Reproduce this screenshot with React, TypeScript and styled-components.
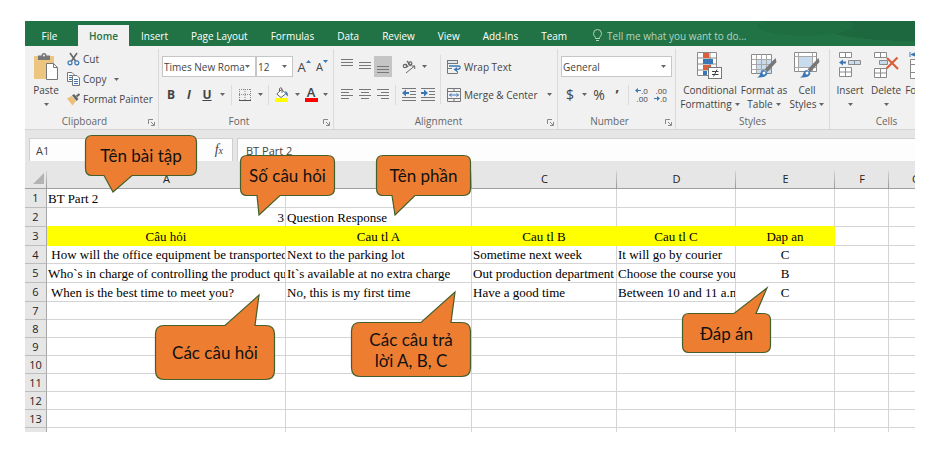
import React from 'react';
import styled, { createGlobalStyle, css } from 'styled-components';

const UI = '"Open Sans", "Noto Sans", sans-serif';
const SERIF = '"Liberation Serif", "Times New Roman", serif';
const GREEN = '#217346';
const INK = '#444444';
const CHROME = '#e6e6e6';
const BLUE = '#3a78b5';
const GREY = '#777777';
const GRID = '#d4d4d4';

const GlobalStyle = createGlobalStyle`
  *, *::before, *::after { box-sizing: border-box; }
  body { margin: 0; background: #ffffff; overflow: hidden; }
  button, input, select {
    margin: 0;
    padding: 0;
    border: 0;
    background: none;
    color: inherit;
    font: inherit;
    appearance: none;
  }
  svg { display: block; flex: none; }
`;

const Page = styled.div`
  height: 100vh;
  padding: 21px 18px 20px 25px;
  font: 10px/14px ${UI};
  color: ${INK};
`;

const Workbook = styled.main`
  position: relative;
  height: 100%;
  overflow: hidden;
  display: flex;
  flex-direction: column;
  background: ${CHROME};
`;

/* ---------- tab strip ---------- */

const TabStrip = styled.nav`
  flex: none;
  display: flex;
  align-items: stretch;
  height: 25px;
  color: #ffffff;
  background:
    radial-gradient(ellipse 48px 10px at calc(100% - 110px) 5px, #1f6e41 0 98%, transparent),
    radial-gradient(ellipse 90px 16px at calc(100% - 6px) 4px, #1d683e 0 98%, transparent),
    ${GREEN};
`;

const Tab = styled.button<{ $active?: boolean; $file?: boolean }>`
  padding: 4px 11px 0 12px;
  white-space: nowrap;
  ${p => p.$file && css`width: 53px; padding: 4px 4px 0 0;`}
  ${p =>
    p.$active &&
    css`
      width: 51px;
      margin-top: 4px;
      padding: 0;
      background: #f1f1f1;
      color: ${GREEN};
      font-weight: 600;
    `}
`;

const TellMe = styled.label`
  display: flex;
  align-items: center;
  gap: 5px;
  flex: 1;
  padding: 4px 0 0 15px;
  color: #b5d3c1;

  input { flex: 1; min-width: 0; height: 18px; }
  input::placeholder { color: #b5d3c1; opacity: 1; }
`;

/* ---------- ribbon ---------- */

const Ribbon = styled.section`
  flex: none;
  display: flex;
  height: 84px;
  background: #f1f1f1;
  border-bottom: 1px solid #d5d5d5;
`;

const Group = styled.section<{ $w: number }>`
  flex: none;
  display: flex;
  flex-direction: column;
  width: ${p => p.$w}px;
  height: 80px;
  margin-top: 3px;
  border-right: 1px solid #dadada;
`;

const GroupBody = styled.div<{ $left: number }>`
  flex: 1;
  min-height: 0;
  display: flex;
  align-items: flex-start;
  padding-left: ${p => p.$left}px;
`;

const GroupFoot = styled.footer`
  display: flex;
  align-items: center;
  height: 16px;
  text-align: center;
  color: #666666;

  h2 { flex: 1; margin: 0; font: inherit; }
`;

const Column = styled.div`
  display: flex;
  flex-direction: column;
  gap: 7px;
  padding-top: 7px;
`;

const ClipList = styled(Column)`
  gap: 0;
  padding-top: 0;
`;

const Line = styled.div`
  display: flex;
  align-items: center;
  height: 21px;
`;

const Tool = styled.button<{ $w: number; $on?: boolean }>`
  flex: none;
  display: flex;
  align-items: center;
  justify-content: center;
  width: ${p => p.$w}px;
  height: 21px;
  background: ${p => (p.$on ? '#c5c5c5' : 'transparent')};
`;

const Glyph = styled.span<{ $size?: number; $bold?: boolean; $italic?: boolean; $line?: boolean }>`
  font-size: ${p => p.$size ?? 12}px;
  font-weight: ${p => (p.$bold ? 700 : 400)};
  font-style: ${p => (p.$italic ? 'italic' : 'normal')};
  text-decoration: ${p => (p.$line ? 'underline' : 'none')};
  line-height: 16px;
`;

const TextTool = styled.button<{ $h?: number }>`
  display: flex;
  align-items: center;
  gap: 3px;
  height: ${p => p.$h ?? 21}px;
  white-space: nowrap;
`;

const Rule = styled.i`
  flex: none;
  width: 1px;
  height: 20px;
  margin: 0 3px;
  background: #dcdcdc;
`;

const TallRule = styled(Rule)`
  height: 49px;
  margin: 6px 6px 0 3px;
`;

const Spacer = styled.i<{ $w: number }>`
  flex: none;
  width: ${p => p.$w}px;
`;

const BigTool = styled.button<{ $w: number }>`
  flex: none;
  display: flex;
  flex-direction: column;
  align-items: center;
  width: ${p => p.$w}px;
  padding-top: 3px;
  white-space: nowrap;

  svg.icon { margin-bottom: 3px; }
`;

const CaretLine = styled.span`
  display: flex;
  align-items: center;
  justify-content: center;
  gap: 3px;
  min-height: 14px;
`;

const Combo = styled.label<{ $w: number }>`
  flex: none;
  display: grid;
  grid-template-columns: 1fr 10px;
  align-items: center;
  width: ${p => p.$w}px;
  height: 21px;
  border: 1px solid #c6c6c6;
  background: #ffffff;

  select { grid-area: 1 / 1 / 2 / 3; width: 100%; height: 19px; padding-left: 1px; }
  svg { grid-area: 1 / 2; pointer-events: none; }
`;

const Caret = () => (
  <svg width="5" height="3" viewBox="0 0 5 3"><path d="M0 0H5L2.5 3Z" fill="#666" /></svg>
);

const Launcher = styled.button`
  width: 14px;
  height: 12px;
  padding: 3px 0 0 4px;
`;

/* ---------- formula bar ---------- */

const FormulaBar = styled.section`
  flex: none;
  display: flex;
  gap: 4px;
  height: 32px;
  padding: 8px 0 0 4px;
  font-size: 11px;
`;

const BarBox = styled.div<{ $w?: number }>`
  flex: ${p => (p.$w ? 'none' : '1')};
  display: flex;
  align-items: center;
  justify-content: flex-end;
  width: ${p => (p.$w ? p.$w + 'px' : 'auto')};
  height: 24px;
  padding: 0 9px 0 6px;
  border: 1px solid #d0d0d0;
  background: #fdfdfd;

  input { flex: 1; min-width: 0; height: 20px; }
`;

const FormulaBox = styled(BarBox)`
  padding: 0 0 0 8px;
  border-right: 0;
`;

const Fx = styled.button`
  font: italic 14px/16px ${SERIF};
  sub { font-size: 10px; vertical-align: baseline; }
`;

/* ---------- grid ---------- */

const Sheet = styled.table`
  width: 100%;
  min-width: 918px;
  flex: none;
  margin: -1px 0 0;
  table-layout: fixed;
  border-spacing: 0;
  border-collapse: separate;
  background: #ffffff;
`;

const ColHead = styled.th`
  height: 28px;
  padding: 9px 0 0;
  border-bottom: 1px solid #a0a0a0;
  background:
    linear-gradient(#d2d2d2, #999999) right bottom / 1px 17px no-repeat,
    ${CHROME};
  font: 11px/14px ${UI};
  color: #222222;
`;

const Corner = styled(ColHead)`
  padding: 8px 3px 0 8px;
`;

const RowHead = styled.th`
  padding: 0;
  border-right: 1px solid #a8a8a8;
  border-bottom: 1px solid #bdbdbd;
  background: ${CHROME};
  font: 11px/14px ${UI};
  color: #222222;
`;

const Row = styled.tr<{ $h: number }>`
  height: ${p => p.$h}px;
`;

const Cell = styled.td<{ $fill?: boolean; $edge?: boolean; $align?: string }>`
  padding: 0 1px;
  overflow: hidden;
  border-right: 1px solid ${p => (p.$fill ? '#ffff00' : GRID)};
  border-bottom: 1px solid ${p => (p.$fill || p.$edge ? '#ffff00' : GRID)};
  background: ${p => (p.$fill ? '#ffff00' : '#ffffff')};
  font: 13px/17px ${SERIF};
  color: #000000;
  text-align: ${p => p.$align ?? 'left'};
  white-space: pre;
`;

/* ---------- callouts ---------- */

const CalloutBox = styled.aside<{ $x: number; $y: number; $w: number; $h: number }>`
  position: absolute;
  left: ${p => p.$x}px;
  top: ${p => p.$y}px;
  width: ${p => p.$w}px;
  height: ${p => p.$h}px;
  display: grid;
  place-items: center;
  font: 17px/21px Lato, "Open Sans", sans-serif;
  color: #111111;
  text-align: center;

  svg { grid-area: 1 / 1; width: 100%; height: 100%; overflow: visible; }
  span { grid-area: 1 / 1; white-space: pre; }
`;

type CalloutData = {
  text: string;
  x: number; y: number; w: number; h: number; r: number;
  from: number; to: number; tip: [number, number];
};

const callouts: CalloutData[] = [
  { text: 'Tên bài tập', x: 60, y: 114, w: 112, h: 41, r: 7, from: 19, to: 47, tip: [28, 57] },
  { text: 'Số câu hỏi', x: 215, y: 134, w: 95, h: 41, r: 7, from: 17, to: 40, tip: [19, 60] },
  { text: 'Tên phần', x: 351, y: 134, w: 95, h: 41, r: 7, from: 16, to: 39, tip: [19, 60] },
  { text: 'Các câu hỏi', x: 130, y: 304, w: 120, h: 55, r: 9, from: 70, to: 100, tip: [104, -30] },
  { text: 'Các câu trả\nlời A, B, C', x: 326, y: 301, w: 120, h: 55, r: 9, from: 70, to: 100, tip: [104, -30] },
  { text: 'Đáp án', x: 657, y: 292, w: 89, h: 40, r: 7, from: 52, to: 74, tip: [85, -25] },
];

function Callout({ text, x, y, w, h, r, from, to, tip }: CalloutData) {
  const [tx, ty] = tip;
  const R = w - 0.5;
  const B = h - 0.5;
  const top = ty < 0 ? `H${from}L${tx} ${ty}L${to} 0.5` : '';
  const bottom = ty > 0 ? `H${to}L${tx} ${ty}L${from} ${B}` : '';
  const d =
    `M${r} 0.5${top}H${R - r}Q${R} 0.5 ${R} ${r}V${B - r}Q${R} ${B} ${R - r} ${B}` +
    `${bottom}H${r}Q0.5 ${B} 0.5 ${B - r}V${r}Q0.5 0.5 ${r} 0.5Z`;
  return (
    <CalloutBox $x={x} $y={y} $w={w} $h={h}>
      <svg viewBox={`0 0 ${w} ${h}`} aria-hidden="true">
        <path d={d} fill="#ed7d31" stroke="#43602a" strokeWidth="1.2" />
      </svg>
      <span>{text}</span>
    </CalloutBox>
  );
}

/* ---------- icons ---------- */

const PasteIcon = () => (
  <svg className="icon" width="26" height="28" viewBox="0 0 26 28">
    <rect x="1" y="4" width="20" height="23" rx="1" fill="#ecc57f" />
    <path d="M5 3.500H8.500A2.500 2.500 0 0 1 13.500 3.500H17V8H5Z" fill="#777" />
    <circle cx="11" cy="3.500" r="1" fill="#f1f1f1" />
    <path d="M13.500 11.500H20.500L24.500 15.500V27.500H13.500Z" fill="#fff" stroke="#777" />
    <path d="M20.500 11.500V15.500H24.500" fill="none" stroke="#777" />
  </svg>
);

const CutIcon = () => (
  <svg width="13" height="14" viewBox="0 0 13 14" fill="none">
    <path d="M3 1L8.500 9M10 1L4.500 9" stroke="#666" strokeWidth="1.600" />
    <circle cx="3" cy="10.800" r="2" stroke={BLUE} strokeWidth="1.200" />
    <circle cx="9.800" cy="10.800" r="2" stroke={BLUE} strokeWidth="1.200" />
  </svg>
);

const CopyIcon = () => (
  <svg width="13" height="14" viewBox="0 0 13 14">
    <path d="M0.500 0.500H5L7.500 3V9.500H0.500Z" fill="#fff" stroke="#777" />
    <path d="M2 3.500H5M2 5.500H5M2 7.500H5" stroke={BLUE} />
    <path d="M5.500 3.500H10L12.500 6V13.500H5.500Z" fill="#fff" stroke="#777" />
    <path d="M7 7.500H11M7 9.500H11M7 11.500H11" stroke={BLUE} />
  </svg>
);

const PainterIcon = () => (
  <svg width="13" height="13" viewBox="0 0 13 13">
    <path d="M0 5.500L4.500 3L9 8L5.500 12.500Z" fill="#ecc07a" />
    <path d="M5 2.500L7 1L11.500 6L9.500 8Z" fill="#666" />
    <path d="M9.500 3.500L12.500 1" stroke="#666" strokeWidth="2.200" />
  </svg>
);

const SizeArrow = ({ down = false }: { down?: boolean }) => (
  <svg width="5" height="4" viewBox="0 0 5 4">
    <path d={down ? 'M0 0H5L2.500 3Z' : 'M0 3H5L2.500 0Z'} fill={BLUE} />
  </svg>
);

const FontSizeMark = styled.span<{ $small?: boolean }>`
  display: flex;
  align-items: flex-start;
  font-size: ${p => (p.$small ? 11 : 13)}px;
  line-height: 14px;
`;

const BordersIcon = () => (
  <svg width="12" height="12" viewBox="0 0 12 12" fill="none" stroke="#888">
    <path d="M0.500 0V11M11.500 0V11M6 0V11M0 0.500H12M0 5.500H12" strokeDasharray="1 1" />
    <path d="M0 11.500H12" stroke="#555" />
  </svg>
);

const FillIcon = () => (
  <svg width="14" height="15" viewBox="0 0 14 15">
    <path d="M6.500 2.500L11 6.500L6 10.500L1.800 7Z" fill="#fff" stroke="#666" />
    <path d="M4.500 5V1.500Q6 0 7 1.500V6" fill="none" stroke="#666" />
    <path d="M10.500 4Q13.500 5.500 12.800 9.500Q11 8 10.500 6Z" fill={BLUE} />
    <rect x="0" y="11" width="13" height="4" fill="#ffff00" />
  </svg>
);

const FontColorMark = styled.span`
  display: flex;
  justify-content: center;
  width: 13px;
  height: 15px;
  border-bottom: 4px solid #ff0000;
  font-size: 13px;
  font-weight: 600;
  line-height: 11px;
`;

const AlignIcon = ({ widths, from = 'start', top = 0 }: { widths: number[]; from?: string; top?: number }) => (
  <svg width="12" height="17" viewBox="0 0 12 17">
    {widths.map((w, i) => (
      <rect
        key={i}
        x={from === 'start' ? 0 : from === 'end' ? 12 - w : (12 - w) / 2}
        y={top + i * 3}
        width={w}
        height="1"
        fill={GREY}
      />
    ))}
  </svg>
);

const OrientIcon = () => (
  <svg width="14" height="14" viewBox="0 0 14 14" fill="none" stroke="#666">
    <circle cx="3" cy="6" r="1.700" strokeWidth="1.200" />
    <path d="M3.600 4L6.200 7.200M5 1L9 5.800" strokeWidth="1.200" />
    <circle cx="8.200" cy="3.600" r="1.700" strokeWidth="1.200" />
    <path d="M4 13L12.500 6M9.800 6H12.700V9" />
  </svg>
);

const IndentIcon = ({ out = false }: { out?: boolean }) => (
  <svg width="14" height="13" viewBox="0 0 14 13">
    <path d="M0 0.500H14M8 3.500H14M8 6.500H14M0 9.500H14M0 12.500H14" stroke={GREY} />
    <path d={out ? 'M0 5L4 1.500V4H7V6H4V8.500Z' : 'M7 5L3 1.500V4H0V6H3V8.500Z'} fill={BLUE} />
  </svg>
);

const WrapIcon = () => (
  <svg width="14" height="14" viewBox="0 0 14 14" fill="none">
    <rect x="0.500" y="0.500" width="10" height="3" fill="#dce9f5" stroke="#777" />
    <path d="M0.500 3.500V13.500H10.500V11M0.500 8.500H5" stroke="#777" />
    <path d="M2 6H11.500Q13.500 6 13 8Q12.500 9.500 9 9.500" stroke={BLUE} strokeWidth="1.300" />
    <path d="M10 7L6.500 9.500L10 12Z" fill={BLUE} />
  </svg>
);

const MergeIcon = () => (
  <svg width="14" height="14" viewBox="0 0 14 14" fill="none" stroke="#777">
    <path d="M0.500 0.500H13.500V13.500H0.500ZM0.500 3.500H13.500M0.500 10.500H13.500M7 0.500V3.500M7 10.500V13.500" />
    <path d="M2.500 7H11.500M4.500 5.500L2.500 7L4.500 8.500M9.500 5.500L11.500 7L9.500 8.500" stroke={BLUE} />
  </svg>
);

const DecimalMark = styled.span`
  display: grid;
  font-size: 8px;
  line-height: 8px;
  span { display: flex; align-items: center; justify-content: flex-end; }
`;

const Arrow = ({ right = false }: { right?: boolean }) => (
  <svg width="6" height="5" viewBox="0 0 6 5">
    <path d={right ? 'M6 2.500L3 0V2H0V3H3V5Z' : 'M0 2.500L3 0V2H6V3H3V5Z'} fill={BLUE} />
  </svg>
);

const ConditionalIcon = () => (
  <svg className="icon" width="26" height="28" viewBox="0 0 26 28">
    <path d="M0.500 0.500H19.500V23.500H0.500ZM0.500 6H19.500M0.500 12H19.500M0.500 18H19.500M13 0.500V23.500" fill="#fff" stroke="#8a8a8a" />
    <rect x="6" y="1" width="6" height="5" fill="#d9603b" />
    <rect x="6" y="7" width="10" height="5" fill={BLUE} />
    <rect x="6" y="13" width="8" height="5" fill="#d9603b" />
    <rect x="6" y="19" width="4" height="4" fill={BLUE} />
    <rect x="11.500" y="15.500" width="13" height="11" fill="#fff" stroke="#777" />
    <path d="M15 19.500H21.500M15 22.500H21.500M20 17.500L16.500 24.500" stroke="#444" />
  </svg>
);

const Brush = () => (
  <>
    <path d="M24.500 6L25.500 10L16.500 20L13.500 17.500Z" fill="#777" />
    <path d="M13 18L16.500 21Q16 26 6 25.500Q9 24 9.500 21Q10.500 18 13 18Z" fill={BLUE} />
    <circle cx="13" cy="21" r="1.500" fill="#fff" />
  </>
);

const TableStyleIcon = () => (
  <svg className="icon" width="26" height="28" viewBox="0 0 26 28">
    <path d="M0.500 2.500H20.500V21.500H0.500Z" fill="#fff" stroke="#8a8a8a" />
    <rect x="6" y="7" width="14" height="14" fill="#c9dcee" />
    <path d="M0.500 7.500H20.500M0.500 12.500H20.500M0.500 17.500H20.500M5.500 2.500V21.500M10.500 2.500V21.500M15.500 2.500V21.500" stroke="#a8a8a8" />
    <Brush />
  </svg>
);

const CellStyleIcon = () => (
  <svg className="icon" width="26" height="28" viewBox="0 0 26 28">
    <path d="M0.500 0.500H22.500V19.500H0.500Z" fill="#fff" stroke="#8a8a8a" />
    <path d="M0.500 4.500H22.500M0.500 15.500H22.500M4.500 0.500V19.500M18.500 0.500V19.500" stroke="#a8a8a8" />
    <rect x="5" y="5" width="13" height="10" fill="#c9dcee" />
    <Brush />
  </svg>
);

const InsertIcon = () => (
  <svg className="icon" width="24" height="28" viewBox="0 0 24 28" fill="#fff" stroke="#8a8a8a">
    <path d="M1.500 0.500H13.500V5.500H1.500ZM7.500 0.500V5.500M1.500 15.500H13.500V24.500H1.500ZM7.500 15.500V24.500M1.500 20H13.500" />
    <path d="M10.500 8.500H22.500V12.500H10.500ZM16.500 8.500V12.500" fill="#c9dcee" />
    <path d="M1 10.500L5 7.500V9.500H8V11.500H5V13.500Z" fill={BLUE} stroke="none" />
  </svg>
);

const DeleteIcon = () => (
  <svg className="icon" width="26" height="28" viewBox="0 0 26 28" fill="#fff" stroke="#8a8a8a">
    <path d="M1.500 0.500H13.500V5.500H1.500ZM7.500 0.500V5.500M1.500 16.500H13.500V25.500H1.500ZM7.500 16.500V25.500M1.500 21H13.500" />
    <path d="M6.500 8.500H14.500V12.500H6.500Z" fill="#c9dcee" />
    <path d="M14 6L25 17M24.500 5.500L13.500 16.500" stroke="#d9603b" strokeWidth="2.200" />
  </svg>
);

const FormatIcon = () => (
  <svg className="icon" width="26" height="28" viewBox="0 0 26 28" fill="#fff" stroke="#8a8a8a">
    <path d="M1.500 7.500H24.500V26.500H1.500ZM1.500 12.500H24.500M1.500 20.500H24.500M7.500 7.500V26.500M18.500 7.500V26.500" />
    <path d="M1 0V5M6 1V4L2 2.500ZM5 2.500H20" stroke={BLUE} fill={BLUE} />
  </svg>
);

const Bulb = () => (
  <svg width="9" height="13" viewBox="0 0 9 13" fill="none" stroke="#b5d3c1">
    <path d="M2.500 8.500Q0.500 6.500 0.500 4.500A4 4 0 0 1 8.500 4.500Q8.500 6.500 6.500 8.500V9.500H2.500ZM3 11.500H6" />
  </svg>
);

const LauncherIcon = () => (
  <svg width="7" height="7" viewBox="0 0 7 7" fill="none" stroke="#888">
    <path d="M0.500 5V0.500H5M3 3L6 6M6.500 3V6.500H3" />
  </svg>
);

/* ---------- content ---------- */

const tabs = ['Insert', 'Page Layout', 'Formulas', 'Data', 'Review', 'View', 'Add-Ins', 'Team'];

type RowData = { h: number; cells: string[]; fill?: boolean; edge?: boolean };

const columns: [string, number | null][] = [
  ['A', 239], ['B', 186], ['C', 145], ['D', 119], ['E', 99], ['F', 54], ['G', null],
];

const rows: RowData[] = [
  { h: 19, cells: ['BT Part 2'] },
  { h: 19, cells: ['3', 'Question Response'], edge: true },
  { h: 19, cells: ['Câu hỏi', 'Cau tl A', 'Cau tl B', 'Cau tl C', 'Dap an'], fill: true },
  { h: 18, cells: [' How will the office equipment be transported?', 'Next to the parking lot', 'Sometime next week', 'It will go by courier', 'C'] },
  { h: 19, cells: ['Who`s in charge of controlling the product quality?', 'It`s available at no extra charge', 'Out production department', 'Choose the course you want', 'B'] },
  { h: 19, cells: [' When is the best time to meet you?', 'No, this is my first time', 'Have a good time', 'Between 10 and 11 a.m.', 'C'] },
  ...Array.from({ length: 8 }, () => ({ h: 18, cells: [] as string[] })),
];

const alignOf = (row: RowData, col: number, value: string) => {
  if (row.fill || col === 4) return 'center';
  return /^\d+$/.test(value) ? 'right' : 'left';
};

function RibbonGroup({ title, width, left, launcher = true, children }: {
  title: string; width: number; left: number; launcher?: boolean; children: React.ReactNode;
}) {
  return (
    <Group $w={width} aria-label={title}>
      <GroupBody $left={left}>{children}</GroupBody>
      <GroupFoot>
        <h2>{title}</h2>
        {launcher && <Launcher aria-label={`${title} settings`}><LauncherIcon /></Launcher>}
      </GroupFoot>
    </Group>
  );
}

function Drop({ label, w = 10 }: { label: string; w?: number }) {
  return <Tool $w={w} aria-label={label}><Caret /></Tool>;
}

export default function App() {
  return (
    <Page>
      <GlobalStyle />
      <Workbook>
        <TabStrip>
          <Tab $file>File</Tab>
          <Tab $active>Home</Tab>
          {tabs.map(t => <Tab key={t}>{t}</Tab>)}
          <TellMe>
            <Bulb />
            <input placeholder="Tell me what you want to do..." aria-label="Tell me what you want to do" />
          </TellMe>
        </TabStrip>

        <Ribbon>
          <RibbonGroup title="Clipboard" width={134} left={3}>
            <BigTool $w={36}>
              <PasteIcon />
              <span>Paste</span>
              <CaretLine><Caret /></CaretLine>
            </BigTool>
            <Spacer $w={3} />
            <ClipList>
              <TextTool $h={20}><CutIcon />Cut</TextTool>
              <TextTool $h={20}><CopyIcon />Copy<Spacer $w={2} /><Caret /></TextTool>
              <TextTool $h={20}><PainterIcon />Format Painter</TextTool>
            </ClipList>
          </RibbonGroup>

          <RibbonGroup title="Font" width={175} left={3}>
            <Column>
              <Line>
                <Combo $w={94}>
                  <select aria-label="Font"><option>Times New Roma</option></select>
                  <Caret />
                </Combo>
                <Combo $w={37}>
                  <select aria-label="Font size"><option>12</option></select>
                  <Caret />
                </Combo>
                <Spacer $w={2} />
                <Tool $w={18} aria-label="Increase font size"><FontSizeMark>A<SizeArrow /></FontSizeMark></Tool>
                <Tool $w={18} aria-label="Decrease font size"><FontSizeMark $small>A<SizeArrow down /></FontSizeMark></Tool>
              </Line>
              <Line>
                <Tool $w={18}><Glyph $bold>B</Glyph></Tool>
                <Tool $w={18}><Glyph $bold $italic>I</Glyph></Tool>
                <Tool $w={18}><Glyph $bold $line>U</Glyph></Tool>
                <Drop label="Underline style" w={12} />
                <Rule />
                <Tool $w={20} aria-label="Borders"><BordersIcon /></Tool>
                <Drop label="Border style" />
                <Rule />
                <Tool $w={20} aria-label="Fill color"><FillIcon /></Tool>
                <Drop label="Fill colors" />
                <Tool $w={18} aria-label="Font color"><FontColorMark>A</FontColorMark></Tool>
                <Drop label="Font colors" />
              </Line>
            </Column>
          </RibbonGroup>

          <RibbonGroup title="Alignment" width={224} left={4}>
            <Column>
              <Line>
                <Tool $w={18} aria-label="Top align"><AlignIcon widths={[12, 12, 12]} top={1} /></Tool>
                <Tool $w={18} aria-label="Middle align"><AlignIcon widths={[12, 12, 12]} top={4} /></Tool>
                <Tool $w={18} $on aria-label="Bottom align"><AlignIcon widths={[12, 12, 12]} top={8} /></Tool>
                <Spacer $w={7} />
                <Tool $w={20} aria-label="Orientation"><OrientIcon /></Tool>
                <Drop label="Orientation options" />
              </Line>
              <Line>
                <Tool $w={18} aria-label="Align left"><AlignIcon widths={[12, 8, 12, 8]} top={3} /></Tool>
                <Tool $w={18} aria-label="Center"><AlignIcon widths={[12, 8, 12, 8]} from="mid" top={3} /></Tool>
                <Tool $w={18} aria-label="Align right"><AlignIcon widths={[12, 8, 12, 8]} from="end" top={3} /></Tool>
                <Rule />
                <Tool $w={20} aria-label="Decrease indent"><IndentIcon out /></Tool>
                <Tool $w={18} aria-label="Increase indent"><IndentIcon /></Tool>
              </Line>
            </Column>
            <TallRule />
            <Column>
              <TextTool><WrapIcon />Wrap Text</TextTool>
              <TextTool><MergeIcon />Merge &amp; Center<Spacer $w={3} /><Caret /></TextTool>
            </Column>
          </RibbonGroup>

          <RibbonGroup title="Number" width={118} left={3}>
            <Column>
              <Combo $w={111}>
                <select aria-label="Number format"><option>General</option></select>
                <Caret />
              </Combo>
              <Line>
                <Tool $w={18}><Glyph $size={14}>$</Glyph></Tool>
                <Drop label="Currency" />
                <Tool $w={20}><Glyph $size={14}>%</Glyph></Tool>
                <Tool $w={16}><Glyph $size={14} $bold>’</Glyph></Tool>
                <Rule />
                <Tool $w={19} aria-label="Increase decimal">
                  <DecimalMark><span><Arrow />.0</span><span>.00</span></DecimalMark>
                </Tool>
                <Tool $w={19} aria-label="Decrease decimal">
                  <DecimalMark><span>.00</span><span><Arrow right />.0</span></DecimalMark>
                </Tool>
              </Line>
            </Column>
          </RibbonGroup>

          <RibbonGroup title="Styles" width={154} left={5} launcher={false}>
            <BigTool $w={58}>
              <ConditionalIcon />
              <span>Conditional</span>
              <CaretLine>Formatting<Caret /></CaretLine>
            </BigTool>
            <BigTool $w={50}>
              <TableStyleIcon />
              <span>Format as</span>
              <CaretLine>Table<Caret /></CaretLine>
            </BigTool>
            <BigTool $w={36}>
              <CellStyleIcon />
              <span>Cell</span>
              <CaretLine>Styles<Caret /></CaretLine>
            </BigTool>
          </RibbonGroup>

          <RibbonGroup title="Cells" width={114} left={2} launcher={false}>
            <BigTool $w={36}>
              <InsertIcon />
              <span>Insert</span>
              <CaretLine><Caret /></CaretLine>
            </BigTool>
            <BigTool $w={36}>
              <DeleteIcon />
              <span>Delete</span>
              <CaretLine><Caret /></CaretLine>
            </BigTool>
            <BigTool $w={36}>
              <FormatIcon />
              <span>Format</span>
              <CaretLine><Caret /></CaretLine>
            </BigTool>
          </RibbonGroup>
        </Ribbon>

        <FormulaBar>
          <BarBox $w={92}><input defaultValue="A1" aria-label="Name box" /></BarBox>
          <BarBox $w={108}><Fx aria-label="Insert function">f<sub>x</sub></Fx></BarBox>
          <FormulaBox><input defaultValue="BT Part 2" aria-label="Formula" /></FormulaBox>
        </FormulaBar>

        <Sheet>
          <colgroup>
            <col width={22} />
            {columns.map(([name, w]) => <col key={name} width={w ?? undefined} />)}
          </colgroup>
          <thead>
            <tr>
              <Corner aria-label="Select all">
                <svg width="11" height="11" viewBox="0 0 11 11"><path d="M11 0V11H0Z" fill="#b3b3b3" /></svg>
              </Corner>
              {columns.map(([name]) => <ColHead key={name} scope="col">{name}</ColHead>)}
            </tr>
          </thead>
          <tbody>
            {rows.map((row, r) => (
              <Row key={r} $h={row.h}>
                <RowHead scope="row">{r + 1}</RowHead>
                {columns.map(([name], c) => (
                  <Cell
                    key={name}
                    $fill={row.fill && c < 5}
                    $edge={row.edge && c < 5}
                    $align={alignOf(row, c, row.cells[c] ?? '')}
                  >
                    {row.cells[c]}
                  </Cell>
                ))}
              </Row>
            ))}
          </tbody>
        </Sheet>

        {callouts.map(c => <Callout key={c.text} {...c} />)}
      </Workbook>
    </Page>
  );
}
